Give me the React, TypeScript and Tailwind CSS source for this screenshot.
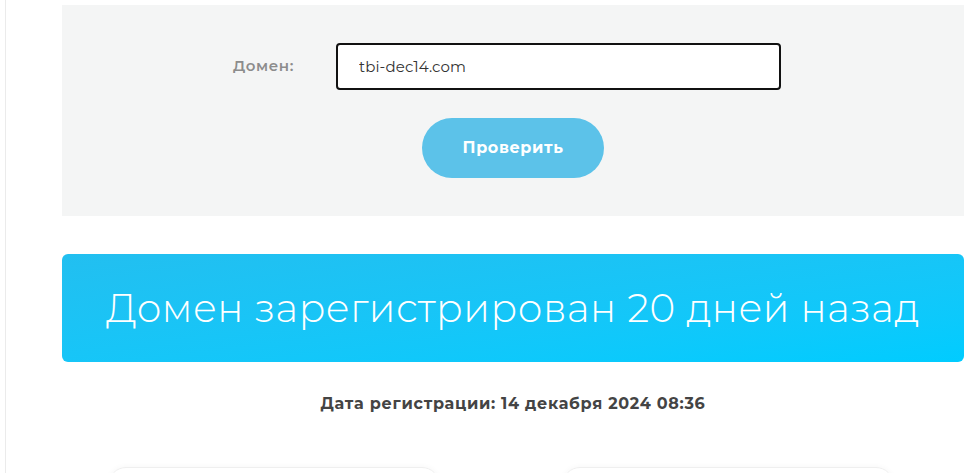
import { useState } from 'react';

export default function App() {
  const [domain, setDomain] = useState('tbi-dec14.com');

  return (
    <div className="h-[473px] w-full overflow-hidden bg-white pl-[5px] font-['Montserrat','Open_Sans',sans-serif]">
      <div className="h-full border-l border-[#ebebeb] pl-[56px] pr-[10px] pt-[5px]">
        {/* search form */}
        <div className="flex h-[211px] flex-col items-center bg-[#f4f5f5] pt-[38px]">
          <div className="flex items-center pr-[12px]">
            <label className="mr-[42px] text-[15px] font-semibold tracking-[0.6px] text-[#8c8c8c]">Домен:</label>
            <input
              value={domain}
              onChange={(e) => setDomain(e.target.value)}
              className="h-[47px] w-[445px] rounded-[4px] border-2 border-[#111] bg-white px-[21px] text-[15px] tracking-[0.1px] text-[#333] outline-none"
            />
          </div>
          <button className="mt-[28px] h-[60px] w-[182px] rounded-full bg-[#5cc2e9] text-[16px] font-bold tracking-[0.6px] text-white">
            Проверить
          </button>
        </div>

        {/* result */}
        <div className="mt-[38px] flex h-[108px] items-center justify-center rounded-[6px] bg-gradient-to-br from-[#22bff0] to-[#00ccff]">
          <h2 className="text-[39px] font-light tracking-[0.55px] text-white">Домен зарегистрирован 20 дней назад</h2>
        </div>

        <p className="mt-[30px] text-center text-[16px] font-bold tracking-[0.7px] text-[#444]">
          Дата регистрации: 14 декабря 2024 08:36
        </p>

        <div className="mt-[51px] flex gap-[122px] pl-[46px]">
          <div className="h-[120px] w-[332px] rounded-[18px] border border-[#efefef] shadow-[0_0_6px_rgba(0,0,0,0.04)]" />
          <div className="h-[120px] w-[332px] rounded-[18px] border border-[#efefef] shadow-[0_0_6px_rgba(0,0,0,0.04)]" />
        </div>
      </div>
    </div>
  );
}
